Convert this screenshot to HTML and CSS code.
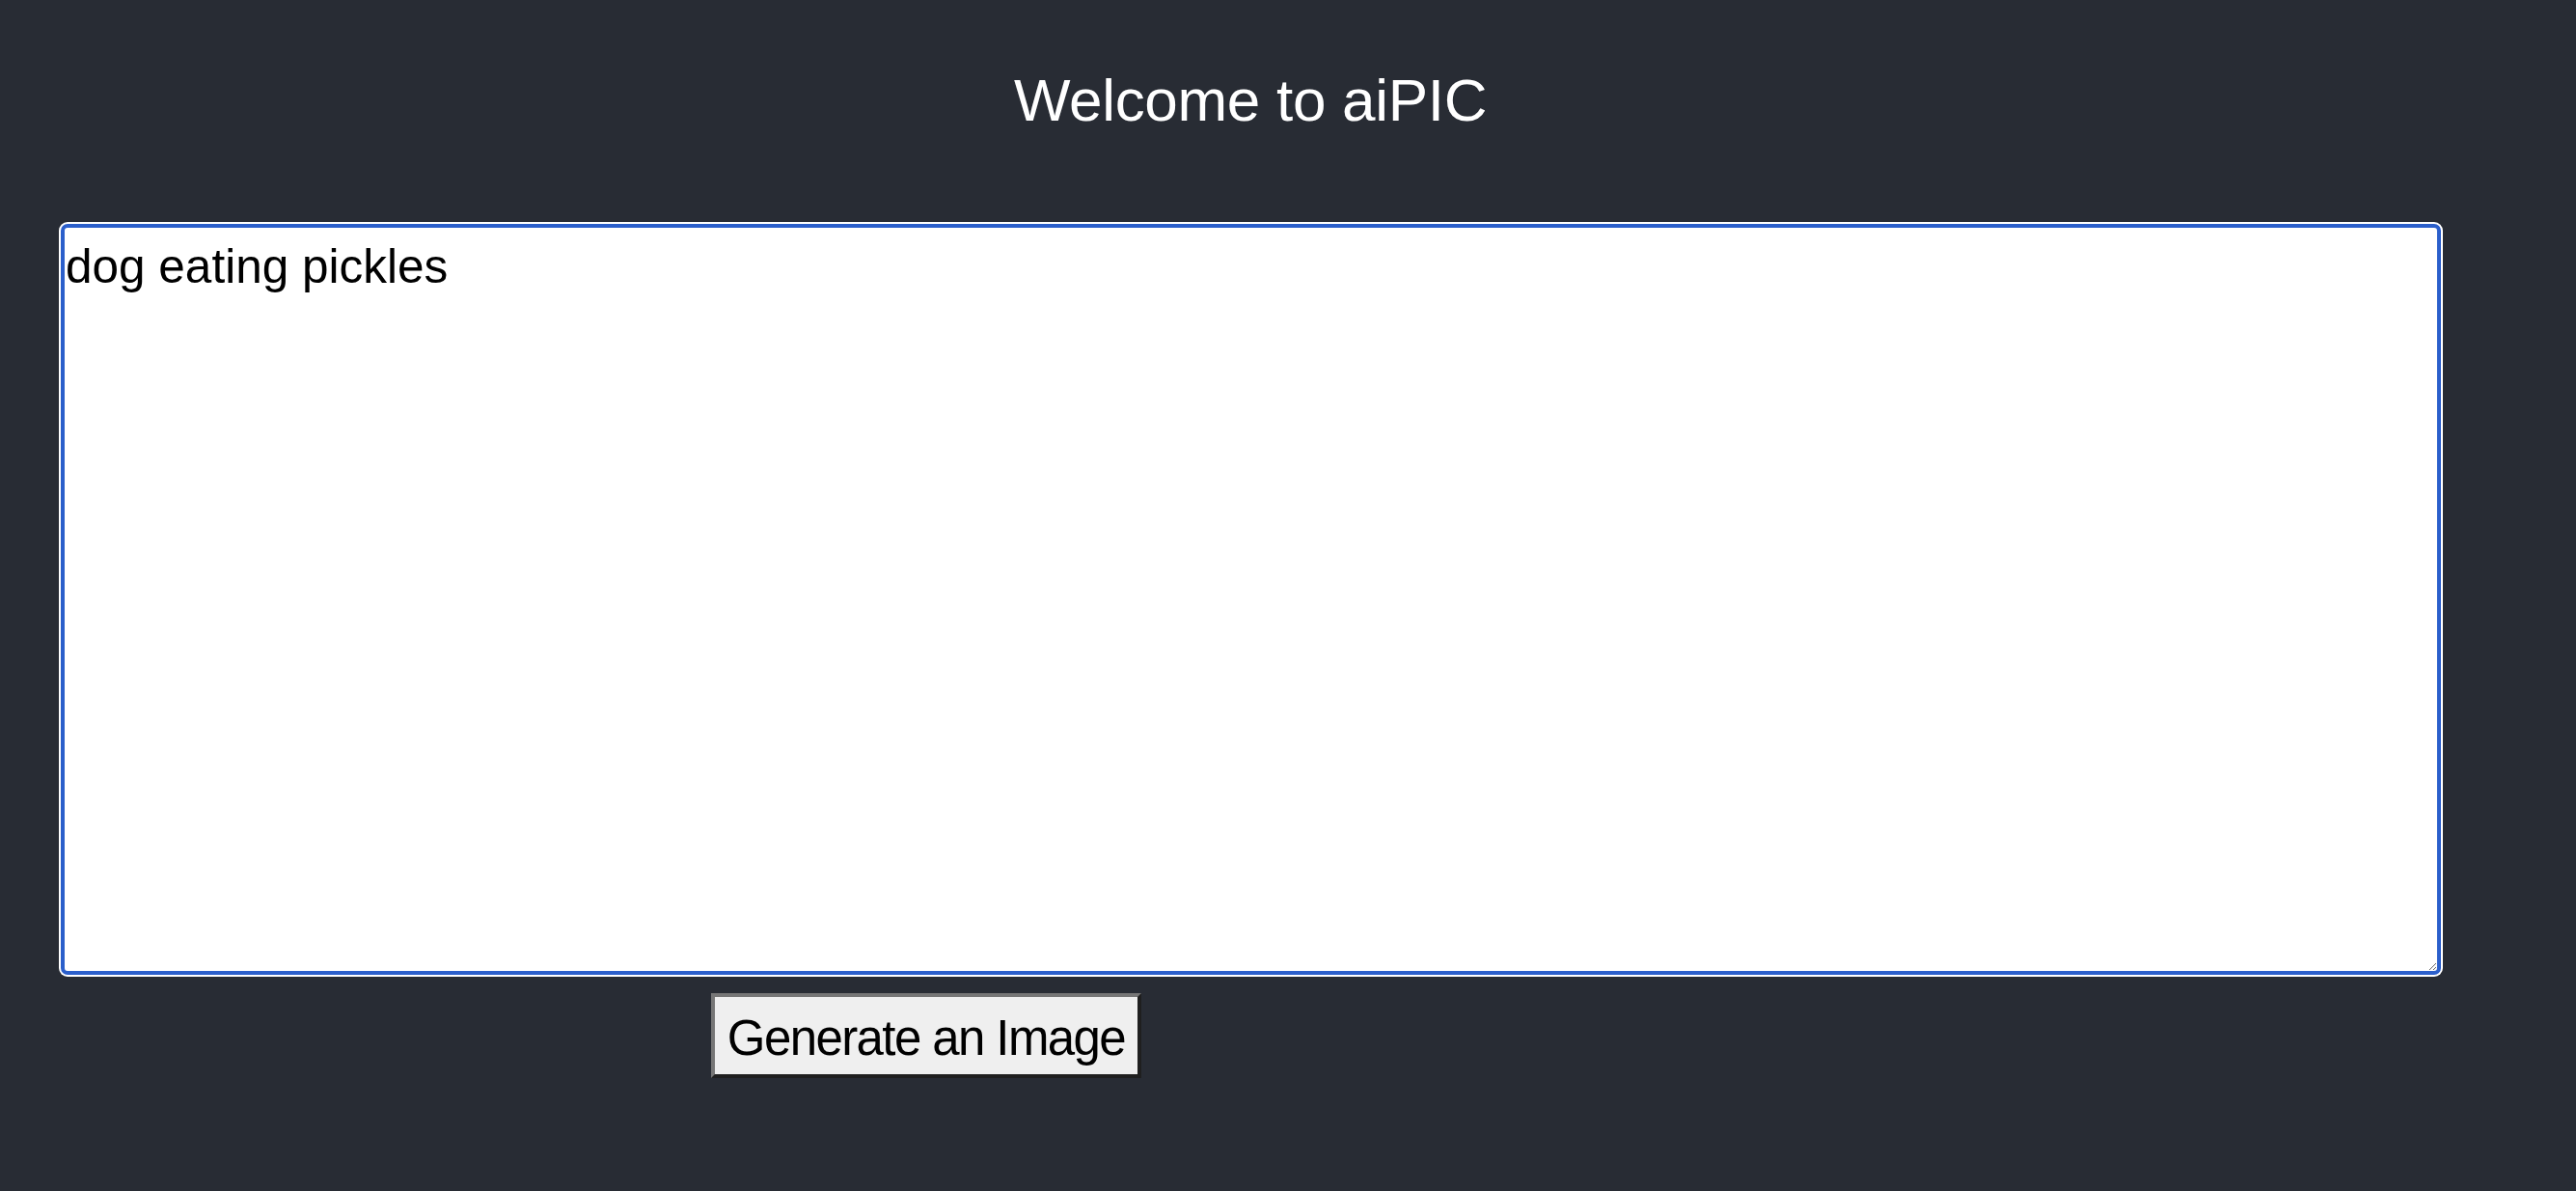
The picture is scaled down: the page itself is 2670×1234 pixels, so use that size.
FILE: index.html
```html
<!DOCTYPE html>
<html>
<head>
<meta charset="utf-8">
<link rel="stylesheet" href="styles.css">
</head>
<body>
<div class="app">
  <header class="header">
    <h1 class="title">Welcome to aiPIC</h1>
  </header>
  <div class="prompt-wrap">
    <textarea class="prompt">dog eating pickles</textarea>
  </div>
  <div class="actions">
    <button class="generate">Generate an Image</button>
  </div>
</div>
</body>
</html>
```
FILE: styles.css
```css
html, body {
  margin: 0;
  padding: 0;
  background: #282c34;
  height: 100%;
}
.app {
  font-family: "Liberation Sans", Arial, sans-serif;
  display: flex;
  flex-direction: column;
}
.header {
  width: 2592px;
  display: flex;
  justify-content: center;
  padding-top: 66px;
}
.title {
  margin: 0;
  color: #ffffff;
  font-size: 62px;
  font-weight: 400;
  line-height: 76px;
  letter-spacing: -0.3px;
  white-space: nowrap;
}
.prompt-wrap {
  padding-left: 63px;
  margin-top: 90px;
  display: flex;
}
.prompt {
  box-sizing: border-box;
  width: 2467px;
  height: 778px;
  border: 4px solid #2b5fcb;
  border-radius: 7px;
  box-shadow: 0 0 0 2px #ffffff;
  outline: none;
  background: #ffffff;
  color: #000000;
  font-family: "Liberation Sans", Arial, sans-serif;
  font-size: 49.5px;
  line-height: 58px;
  padding: 11px 1px;
  margin: 0;
}
.actions {
  padding-left: 737px;
  margin-top: 19px;
  display: flex;
}
.generate {
  box-sizing: border-box;
  width: 446px;
  height: 88px;
  background: #efefef;
  border-width: 4px;
  border-style: solid;
  border-color: #767676 #1f1f1f #1f1f1f #767676;
  border-radius: 0;
  color: #000000;
  font-family: "Liberation Sans", Arial, sans-serif;
  font-size: 51px;
  padding: 5px 0 0;
  letter-spacing: -1.6px;
  white-space: nowrap;
}
```
